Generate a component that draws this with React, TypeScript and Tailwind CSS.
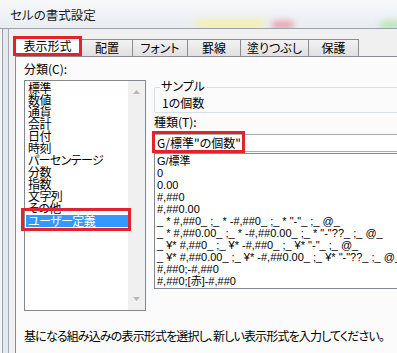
const jp = "font-['Noto_Sans_CJK_JP',sans-serif] [font-feature-settings:'palt']";

const categories = [
  "標準",
  "数値",
  "通貨",
  "会計",
  "日付",
  "時刻",
  "パーセンテージ",
  "分数",
  "指数",
  "文字列",
  "その他",
  "ユーザー定義",
];

const formats = [
  "G/標準",
  "0",
  "0.00",
  "#,##0",
  "#,##0.00",
  '_ * #,##0_ ;_ * -#,##0_ ;_ * "-"_ ;_ @_',
  '_ * #,##0.00_ ;_ * -#,##0.00_ ;_ * "-"??_ ;_ @_',
  '_ ¥* #,##0_ ;_ ¥* -#,##0_ ;_ ¥* "-"_ ;_ @_',
  '_ ¥* #,##0.00_ ;_ ¥* -#,##0.00_ ;_ ¥* "-"??_ ;_ @_',
  "#,##0;-#,##0",
  "#,##0;[赤]-#,##0",
];

const tabs = [
  { label: "配置", w: "w-[52px]" },
  { label: "フォント", w: "w-[56px]" },
  { label: "罫線", w: "w-[54px]" },
  { label: "塗りつぶし", w: "w-[69px]" },
  { label: "保護", w: "w-[51px]" },
];

function TitleBar() {
  return (
    <div className="relative h-[29px] overflow-hidden border-b border-[#9aa3ad] bg-gradient-to-b from-[#f7f8fa] to-[#e9edf1]">
      {/* blurred desktop behind the glass */}
      <span className="absolute left-[195px] top-[20px] h-[10px] w-[70px] rounded-full bg-[#f3f0a8] blur-[4px]" />
      <span className="absolute left-[272px] top-[21px] h-[8px] w-[22px] rounded-full bg-[#e9a0a8] blur-[3px]" />
      <span className="absolute left-[380px] top-[21px] h-[8px] w-[30px] rounded-full bg-[#b9e3b4] blur-[3px]" />
      <div className={`relative pl-[10px] pt-[7px] text-[12.5px] leading-[16px] text-[#1a1a1a] ${jp}`}>
        セルの書式設定
      </div>
    </div>
  );
}

function TabStrip() {
  return (
    <div className={`flex h-[20px] items-end pl-[4px] text-[12px] text-black ${jp}`}>
      <div className="relative z-10 flex h-[20px] w-[69px] items-center justify-center border-[3px] border-[#e3222c] bg-white leading-[14px]">
        表示形式
      </div>
      {tabs.map((t) => (
        <div
          key={t.label}
          className={`-ml-px flex h-[17px] ${t.w} items-center justify-center border border-b-0 border-[#898c95] bg-gradient-to-b from-[#f2f2f2] to-[#e0e0e0] leading-[14px]`}
        >
          {t.label}
        </div>
      ))}
    </div>
  );
}

function CategoryList() {
  return (
    <div className="flex h-[231px] w-[122px] border border-[#828790] bg-white">
      <div className={`flex-1 pl-px pt-px text-[12px] leading-[12px] tracking-[-0.6px] text-black ${jp}`}>
        {categories.map((c, i) =>
          i === categories.length - 1 ? (
            <div key={c} className="mt-px h-[12px] bg-[#3399ff] pl-[2px] text-white">
              {c}
            </div>
          ) : (
            <div key={c} className="h-[12px] whitespace-nowrap pl-[2px]">
              {c}
            </div>
          )
        )}
      </div>
      <div className="flex w-[17px] flex-col items-center justify-between bg-[#f0f0f0] py-[9px]">
        <svg width="7" height="4" viewBox="0 0 7 4">
          <path d="M0 4 L3.5 0 L7 4 Z" fill="#b8b8b8" />
        </svg>
        <svg width="7" height="4" viewBox="0 0 7 4">
          <path d="M0 0 L3.5 4 L7 0 Z" fill="#b8b8b8" />
        </svg>
      </div>
    </div>
  );
}

function FormatPane() {
  return (
    <div className="flex w-[260px] shrink-0 flex-col pt-[22px]">
      <div className="relative mt-[8px] h-[26px] rounded-[2px] border border-[#d5dfe5]">
        <span className={`absolute -top-[9px] left-[5px] bg-[#fbfbfb] px-[1px] text-[12px] leading-[14px] ${jp}`}>
          サンプル
        </span>
        <div className={`pl-[7px] pt-[8px] text-[12px] leading-[14px] ${jp}`}>1の個数</div>
      </div>
      <div className={`mt-[2px] text-[12px] leading-[14px] ${jp}`}>種類(T):</div>
      <div className="relative mt-[5px] h-[18px] border border-[#abadb3] bg-white">
        <div className={`pl-[2px] pt-px text-[12px] leading-[14px] ${jp}`}>G/標準"の個数"</div>
        <span className="absolute -left-[3px] -top-[4px] h-[22px] w-[93px] border-[3px] border-[#e3222c]" />
      </div>
      <div className="mt-px h-[136px] overflow-hidden border border-[#828790] bg-white pl-[2px] pt-px font-['Liberation_Sans','Noto_Sans_CJK_JP',sans-serif] text-[11px] leading-[12px] text-black">
        {formats.map((f) => (
          <div key={f} className="h-[12px] whitespace-pre">
            {f}
          </div>
        ))}
      </div>
    </div>
  );
}

export default function App() {
  return (
    <div className="h-[353px] w-[397px] overflow-hidden bg-[#f3f5f7]">
      <TitleBar />
      <div className="flex h-[324px]">
        <div className="ml-[2px] w-[6px] border-l border-[#9aa0a6] bg-[#e3e9ef]" />
        <div className="flex-1 overflow-hidden border-l border-[#a4a9ae] bg-[#f0f0f0] pt-[7px]">
          <TabStrip />
          <div className="ml-[6px] h-[300px] w-[400px] border-l border-t border-[#898c95] bg-[#fbfbfb] pl-[8px] text-black">
            <div className="flex gap-[8px]">
              <div className="flex flex-col">
                <div className={`mt-[5px] text-[12px] leading-[14px] ${jp}`}>分類(C):</div>
                <div className="relative mt-[4px]">
                  <CategoryList />
                  <span className="absolute -left-[3px] top-[128px] h-[23px] w-[110px] border-[3px] border-[#e3222c]" />
                </div>
              </div>
              <FormatPane />
            </div>
            <div className={`mt-[18px] whitespace-nowrap text-[12px] leading-[14px] tracking-[-0.85px] ${jp}`}>
              基になる組み込みの表示形式を選択し、新しい表示形式を入力してください。
            </div>
          </div>
        </div>
      </div>
    </div>
  );
}
